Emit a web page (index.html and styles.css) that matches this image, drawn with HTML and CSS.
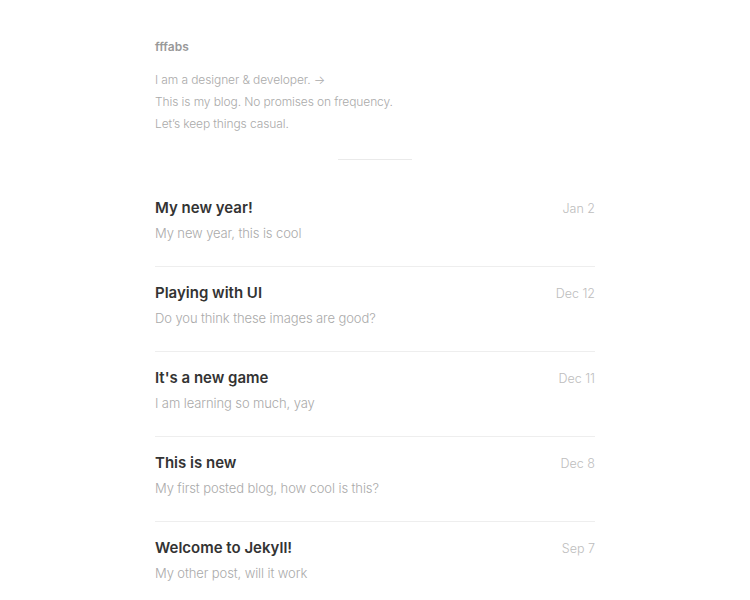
FILE: index.html
```html
<!DOCTYPE html>
<html lang="en">
<head>
<meta charset="utf-8">
<title>fffabs</title>
<link rel="stylesheet" href="styles.css">
</head>
<body>
<main class="wrap">
  <header class="intro">
    <div class="site-name">fffabs</div>
    <p class="about">I am a designer &amp; developer. &rarr;<br>This is my blog. No promises on frequency.<br>Let’s keep things casual.</p>
  </header>
  <hr class="rule">
  <ul class="posts">
    <li class="post">
      <div class="post-head"><span class="post-title">My new year!</span><span class="post-date">Jan 2</span></div>
      <div class="post-excerpt">My new year, this is cool</div>
    </li>
    <li class="post">
      <div class="post-head"><span class="post-title">Playing with UI</span><span class="post-date">Dec 12</span></div>
      <div class="post-excerpt">Do you think these images are good?</div>
    </li>
    <li class="post">
      <div class="post-head"><span class="post-title">It's a new game</span><span class="post-date">Dec 11</span></div>
      <div class="post-excerpt">I am learning so much, yay</div>
    </li>
    <li class="post">
      <div class="post-head"><span class="post-title">This is new</span><span class="post-date">Dec 8</span></div>
      <div class="post-excerpt">My first posted blog, how cool is this?</div>
    </li>
    <li class="post">
      <div class="post-head"><span class="post-title">Welcome to Jekyll!</span><span class="post-date">Sep 7</span></div>
      <div class="post-excerpt">My other post, will it work</div>
    </li>
  </ul>
</main>
</body>
</html>
```
FILE: styles.css
```css
* { box-sizing: border-box; }
html, body { margin: 0; padding: 0; background: #fff; }
body { font-family: Inter, "Noto Sans", sans-serif; color: #333; }
.wrap { width: 440px; margin: 0 auto; padding-top: 37px; }
.site-name { font-size: 12px; line-height: 20px; font-weight: 600; color: #999; }
.about { margin: 12px 0 0; font-size: 12px; line-height: 22px; font-weight: 300; color: #aaaaaa; letter-spacing: -0.1px; }
.rule { width: 74px; height: 1px; border: 0; background: #eaeaea; margin: 24px auto 22px; }
.posts { list-style: none; margin: 0; padding: 0; }
.post { padding: 16px 0 23px; border-bottom: 1px solid #eeeeee; }
.post:last-child { border-bottom: 0; }
.post-head { display: flex; justify-content: space-between; align-items: baseline; }
.post-title { font-size: 15px; line-height: 20px; font-weight: 600; color: #333; }
.post-date { font-size: 12.5px; font-weight: 300; color: #bdbdbd; }
.post-excerpt { margin-top: 5px; font-size: 13px; line-height: 20px; font-weight: 300; color: #aaaaaa; letter-spacing: -0.1px; }
```
